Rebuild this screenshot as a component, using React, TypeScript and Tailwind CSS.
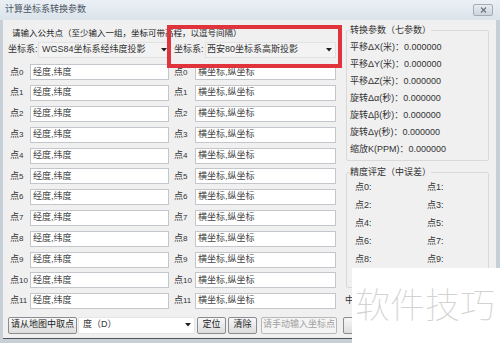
const font = "font-['Liberation_Sans','Noto_Sans_CJK_SC',sans-serif]";

const params = [
  "平移ΔX(米)：0.000000",
  "平移ΔY(米)：0.000000",
  "平移ΔZ(米)：0.000000",
  "旋转Δα(秒)：0.000000",
  "旋转Δβ(秒)：0.000000",
  "旋转Δγ(秒)：0.000000",
  "缩放K(PPM)：0.000000",
];

const Arrow = () => (
  <svg width="6" height="4" viewBox="0 0 6 4" className="shrink-0">
    <path d="M0 0 L6 0 L3 3.5 Z" fill="#222" />
  </svg>
);

const Button = ({ label, w, disabled }: { label: string; w: string; disabled?: boolean }) => (
  <div
    className={`${w} h-[17px] shrink-0 flex items-center justify-center rounded-[2px] border ${
      disabled
        ? "border-[#b5b9bd] bg-[#f4f4f4] text-[#a0a0a0]"
        : "border-[#8a8d90] bg-gradient-to-b from-[#f7f7f7] to-[#dddddd] text-[#222]"
    }`}
  >
    {label}
  </div>
);

const PointRow = ({ i }: { i: number }) => (
  <div className="flex items-center h-[20.8px]">
    <span className="w-[22px] pl-[2px] text-[#333]">
      点<span className="text-[8px]">{i}</span>
    </span>
    <div className="w-[139px] h-[16px] bg-white border border-[#c3c7cc] flex items-center pl-[2px] text-[#444]">
      经度,纬度
    </div>
    <span className="w-[26px] pl-[5px] text-[#333]">
      点<span className="text-[8px]">{i}</span>
    </span>
    <div className="w-[141px] h-[16px] bg-white border border-[#c3c7cc] flex items-center pl-[2px] text-[#444]">
      横坐标,纵坐标
    </div>
  </div>
);

export default function App() {
  return (
    <div className={`w-[500px] h-[343px] relative overflow-hidden bg-[#c7cfd7] text-[9px] ${font}`}>
      {/* title bar */}
      <div className="h-[20px] flex items-center pl-[5px] bg-gradient-to-b from-[#eaf0f5] to-[#dbe3eb] text-[#4b5563]">
        计算坐标系转换参数
        <div className="ml-auto mr-[7px] w-[20px] h-[12px] flex items-center justify-center rounded-[2px] border border-[#a3adb8] bg-gradient-to-b from-[#e6ebf0] to-[#cdd5dd]">
          <svg width="7" height="6" viewBox="0 0 7 6">
            <path d="M1 0.5 L6 5.5 M6 0.5 L1 5.5" stroke="#6b7580" strokeWidth="1.2" />
          </svg>
        </div>
      </div>

      {/* body */}
      <div className="ml-[3px] mr-[4px] h-[319px] bg-[#f0f0f0] border-b border-[#50545a] flex flex-col">
        <div className="flex h-[291.6px]">
          {/* left column */}
          <div className="w-[343px] pl-[5px] flex flex-col">
            <div className="mt-[7px] h-[13px] pl-[4px] flex items-center text-[8.5px] text-[#222]">
              请输入公共点（至少输入一组，坐标可带高程，以逗号间隔）
            </div>
            <div className="mt-[2px] h-[16px] flex items-center text-[#333]">
              <span className="w-[30px]">坐标系:</span>
              <div className="w-[131px] h-[16px] flex items-center pl-[3px] pr-[1px] border border-[#e2e2e2] bg-[#f3f3f3]">
                <span className="flex-1">WGS84坐标系经纬度投影</span>
                <Arrow />
              </div>
              <span className="ml-[5px] w-[31px]">坐标系:</span>
              <div className="w-[131px] h-[16px] flex items-center pl-[1px] pr-[3px] border border-[#e2e2e2] bg-[#f3f3f3]">
                <span className="flex-1">西安80坐标系高斯投影</span>
                <Arrow />
              </div>
            </div>
            <div className="mt-[4px] flex flex-col">
              {Array.from({ length: 12 }, (_, i) => (
                <PointRow key={i} i={i} />
              ))}
            </div>
          </div>

          {/* right column */}
          <div className="w-[147px] flex flex-col text-[#333]">
            <fieldset className="mt-[4px] w-[143px] border border-[#d9d9d9] rounded-[2px] pl-[3px] pb-[2px]">
              <legend className="leading-[12px] text-[#333]">转换参数（七参数）</legend>
              <div className="pt-[3px] flex flex-col">
                {params.map((p) => (
                  <div key={p} className="leading-[17px]">
                    {p}
                  </div>
                ))}
              </div>
            </fieldset>
            <fieldset className="mt-[5px] w-[143px] h-[122px] border border-[#d9d9d9] rounded-[2px] pl-[3px]">
              <legend className="leading-[12px] text-[#333]">精度评定（中误差）</legend>
              <div className="grid grid-cols-[72px_1fr] pl-[5px]">
                {Array.from({ length: 10 }, (_, i) => (
                  <div key={i} className="leading-[18px]">
                    点{i}:
                  </div>
                ))}
              </div>
            </fieldset>
            <div className="mt-[6px] -ml-[1px] leading-[12px]">中</div>
          </div>
        </div>

        {/* bottom row */}
        <div className="mt-[5px] pl-[5px] flex items-center">
          <Button label="请从地图中取点" w="w-[69px]" />
          <div className="ml-[1px] w-[117px] h-[17px] flex items-center pl-[4px] pr-[3px] bg-white border border-[#e6e6e6]">
            <span className="flex-1 text-[#333]">度（D）</span>
            <Arrow />
          </div>
          <div className="ml-[2px]">
            <Button label="定位" w="w-[29px]" />
          </div>
          <div className="ml-[2px]">
            <Button label="清除" w="w-[29px]" />
          </div>
          <div className="ml-[4px]">
            <Button label="请手动输入坐标点" w="w-[76px]" disabled />
          </div>
          <div className="ml-[6px]">
            <Button label="" w="w-[60px]" />
          </div>
        </div>
      </div>

      {/* annotation box */}
      <div className="absolute left-[167px] top-[25px] w-[175px] h-[43px] border-[4px] border-[#e1333b]" />

      {/* watermark */}
      <div className="absolute left-[352px] top-[268px] right-0 bottom-0 bg-white pl-[3px] pt-[17px]">
        <div className="text-[35px] leading-[35px] font-thin text-[#d2d2d2] font-['Noto_Sans_CJK_SC',sans-serif] whitespace-nowrap">
          软件技巧
        </div>
      </div>
    </div>
  );
}
